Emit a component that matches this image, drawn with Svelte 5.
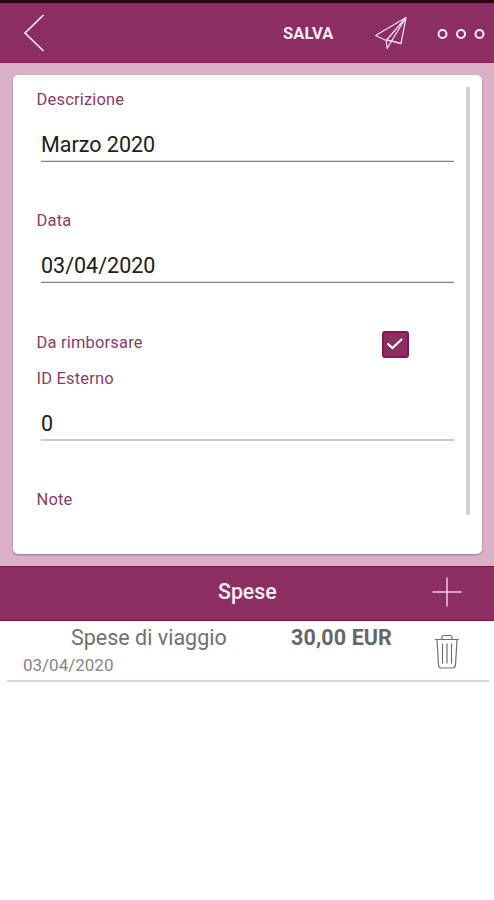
<script>
  const fields = [
    { label: 'Descrizione', value: 'Marzo 2020' },
    { label: 'Data', value: '03/04/2020' }
  ];
</script>

<div class="screen">
  <header>
    <svg class="back" width="24" height="42" viewBox="0 0 24 42" aria-hidden="true"><path d="M22.500 3 4 21 22.500 39" /></svg>
    <span class="save">SALVA</span>
    <svg class="send" width="36" height="36" viewBox="0 0 36 36" aria-hidden="true"><path d="M32 2.500 1.700 20.500l10.500 5L32 2.500 27 28.500l-9.500-2.500L32 2.500M12.200 25.500l1 8 4.300-7.500-5.300-1" /></svg>
    <svg class="more" width="48" height="12" viewBox="0 0 48 12" aria-hidden="true">
      <circle cx="5.5" cy="6" r="4" /><circle cx="24" cy="6" r="4" /><circle cx="42.500" cy="6" r="4" />
    </svg>
  </header>

  <main>
    <section class="card">
      <div class="form">
        {#each fields as field}
          <div class="field">
            <div class="label">{field.label}</div>
            <div class="value">{field.value}</div>
          </div>
        {/each}
        <div class="check-row">
          <span class="label">Da rimborsare</span>
          <span class="checkbox"><svg width="18" height="14" viewBox="0 0 18 14" aria-hidden="true"><path d="m1.500 6.500 5 4.500L16 2" /></svg></span>
        </div>
        <div class="field light">
          <div class="label">ID Esterno</div>
          <div class="value">0</div>
        </div>
        <div class="label">Note</div>
      </div>
      <div class="scrollbar"></div>
    </section>
  </main>

  <div class="expenses-bar">
    <h2>Spese</h2>
    <svg width="30" height="30" viewBox="0 0 30 30" aria-hidden="true"><path d="M15 .5v29M.5 15h29" /></svg>
  </div>

  <article class="expense">
    <div class="info">
      <div class="summary"><span class="name">Spese di viaggio</span><span class="amount">30,00 EUR</span></div>
      <div class="date">03/04/2020</div>
    </div>
    <svg width="26" height="36" viewBox="0 0 26 36" aria-hidden="true">
      <path d="M1 5.500h24M8 5V3q0-1.500 1.500-1.500h7Q18 1.500 18 3v2M3 5.500l1.500 25.500q.3 3 3 3h11q2.700 0 3-3L23 5.500M8.500 9.500v20M13 9.500v20M17.500 9.500v20" />
    </svg>
  </article>
</div>

<style>
  :global(body) { margin: 0; background: #fff; }
  .screen { width: 494px; height: 900px; overflow: hidden; background: #fff; font-family: Roboto, "Liberation Sans", sans-serif; }
  svg { display: block; flex: none; fill: none; stroke: #fff; }
  header { box-sizing: border-box; height: 63px; display: flex; align-items: center; background: #8b2f62; border-top: 3px solid #29051a; border-bottom: 1px solid #8d1c5d; padding: 0 9px 0 21px; color: #fff; }
  .back { stroke: #ffe8f8; stroke-width: 1.7; }
  .save { margin: 2px 0 0 238px; font-size: 16.5px; font-weight: 700; line-height: 24px; letter-spacing: .1px; color: #ffeafa; }
  .send { margin-left: auto; margin-right: 27px; stroke: #f8d9ed; stroke-width: 1.3; stroke-linejoin: round; }
  .more { stroke: #ffe8f6; stroke-width: 2; margin-top: 2px; }
  main { box-sizing: border-box; height: 503px; padding: 12px 12px 12px 13px; background: #d9b0c7; }
  .card { box-sizing: border-box; height: 479px; display: flex; padding: 12px 12px 12px 23.5px; border-radius: 5px; background: #fff; box-shadow: 0 1px 2px #95708a; }
  .form { width: 417.5px; }
  .scrollbar { width: 4px; height: 428px; margin-left: auto; background: #d2d2d2; }
  .label { font-size: 16.5px; line-height: 26px; letter-spacing: .18px; color: #8b3b69; }
  .field { height: 121.3px; }
  .value { box-sizing: border-box; height: 34px; margin: 15px 0 0 4.5px; padding-top: 2px; border-bottom: 1px solid #858585; box-shadow: inset 0 -1px #dedede; font-size: 21.5px; line-height: 29px; color: #202020; letter-spacing: 0; }
  .light .value { border-bottom: 2px solid #cbcbcb; box-shadow: none; }
  .check-row { display: flex; justify-content: space-between; height: 36px; }
  .checkbox { display: flex; align-items: center; justify-content: center; box-sizing: border-box; width: 27px; height: 27px; margin: 1px 45.5px 0 0; border: 2px solid #851753; border-radius: 3px; background: #8b2f62; }
  .checkbox svg { stroke-width: 2.2; }
  .expenses-bar { box-sizing: border-box; height: 55px; display: flex; align-items: center; padding: 0 32px 3px 218px; background: #8b2f62; border-top: 1px solid #821351; border-bottom: 1px solid #821351; }
  h2 { margin: 0; font-size: 21.3px; font-weight: 500; line-height: 28px; color: #ffeafa; }
  .expenses-bar svg { margin-left: auto; stroke: #f4c9e4; stroke-width: 1.5; }
  .expense { box-sizing: border-box; display: flex; height: 61px; margin: 0 5px 0 7px; padding: 2px 29px 0 16px; border-bottom: 2px solid #dbd1d7; }
  .info { width: 369px; }
  .summary { display: flex; justify-content: space-between; padding-left: 48px; font-size: 21.5px; line-height: 29px; color: #707070; }
  .amount { font-weight: 700; color: #666; letter-spacing: .1px; }
  .date { font-size: 17px; line-height: 26px; color: #858585; letter-spacing: 0; }
  .expense svg { margin: 11px 0 0 auto; stroke: #707070; stroke-width: 1.2; }
</style>
